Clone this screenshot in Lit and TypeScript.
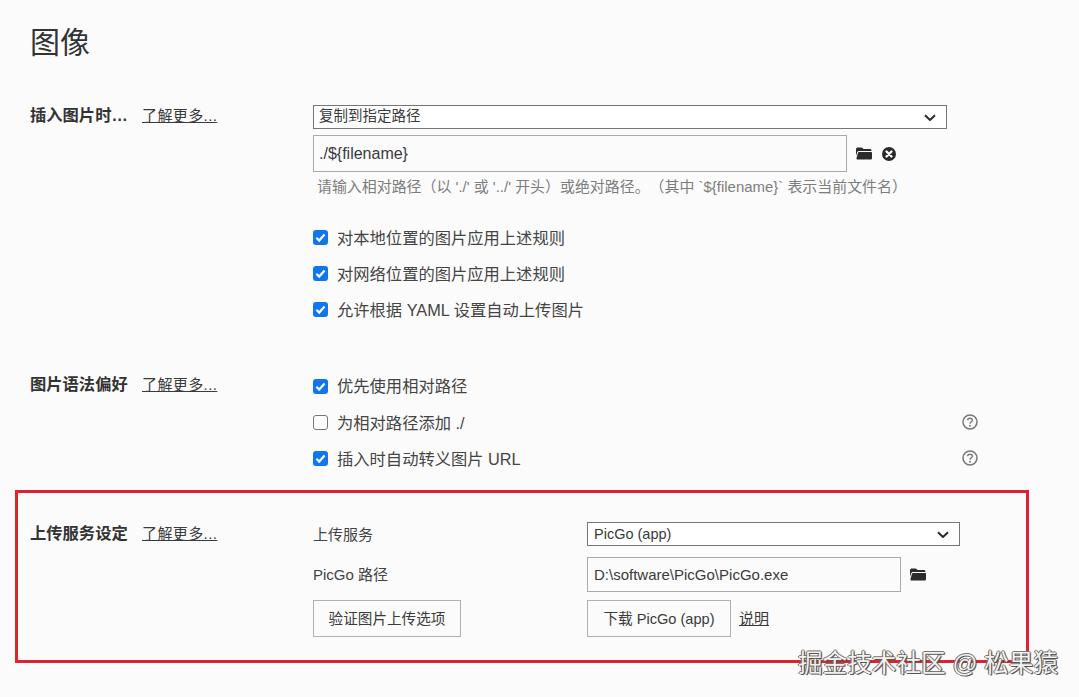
import { LitElement, html, css, svg } from "lit";
import { customElement } from "lit/decorators.js";

const folder = html`<svg class="ico folder" viewBox="0 0 16 13" aria-hidden="true"><path fill="#2b2b2b" d="M0 2.2C0 1.2.8.5 1.7.5h3.6c.6 0 1 .2 1.3.6l.8 1h6.5c.9 0 1.6.7 1.6 1.5v.4H2.8c-.7 0-1.3.4-1.5 1L0 8.8z"/><path fill="#2b2b2b" d="M3 5h12.3c.4 0 .7.3.7.7v5.2c0 1-.7 1.6-1.6 1.6H1.5C.9 12.500.4 12 .4 11.500L2 5.800C2.200 5.300 2.500 5 3 5z"/></svg>`;

const clear = html`<svg class="ico clear" viewBox="0 0 14 14" aria-hidden="true"><circle cx="7" cy="7" r="7" fill="#2b2b2b"/><path d="M4.500 4.500l5 5M9.500 4.500l-5 5" stroke="#fff" stroke-width="2.300" stroke-linecap="round"/></svg>`;

const help = html`<svg class="help" viewBox="0 0 16 16" aria-hidden="true"><circle cx="8" cy="8" r="7" fill="none" stroke="#777" stroke-width="1.500"/><path d="M5.700 6.300c0-1.300 1-2.100 2.300-2.100s2.300.8 2.300 2c0 1.900-2.300 1.800-2.300 3.500" fill="none" stroke="#777" stroke-width="1.400"/><circle cx="8" cy="11.800" r=".95" fill="#777"/></svg>`;

const chevron = svg`<path d="M1 1.300l5 4.700 5-4.700" fill="none" stroke="#2a2a2a" stroke-width="2"/>`;

@customElement("app-root")
export class AppRoot extends LitElement {
  static styles = css`
    :host {
      display: block;
      position: relative;
      width: 1079px;
      height: 697px;
      overflow: hidden;
      background: #fbfbfc;
      color: #3a3a3a;
      font-family: "Liberation Sans", "Noto Sans CJK SC", sans-serif;
      font-size: 16px;
      text-spacing-trim: space-all;
    }
    h1 {
      margin: 0;
      padding: 22px 0 0 30px;
      height: 42px;
      line-height: 42px;
      font-size: 30px;
      font-weight: 400;
      color: #333;
    }
    .section {
      display: grid;
      grid-template-columns: 283px 665px;
      padding-left: 30px;
    }
    .first { margin-top: 41px; }
    .second { margin-top: 41px; }
    .head {
      display: flex;
      height: 22px;
      line-height: 22px;
      align-items: center;
    }
    .first .head { margin-top: -1px; }
    .second .head { margin-top: 5px; }
    .title {
      width: 112px;
      font-weight: 700;
      font-size: 16.300px;
      color: #333;
      white-space: nowrap;
    }
    a {
      color: #3a3a3a;
      text-decoration: underline;
      font-size: 15px;
      letter-spacing: 0.4px;
      white-space: nowrap;
    }
    .head a { margin-top: 2px; }
    .select {
      box-sizing: border-box;
      display: flex;
      align-items: center;
      justify-content: space-between;
      width: 100%;
      height: 24px;
      padding: 0 10px 0 6px;
      border: 1.500px solid #767676;
      background: #fff;
      font-size: 14.500px;
    }
    .first .select { width: 634px; padding-left: 5px; }
    .first .select span { margin-bottom: 6px; }
    .select svg { width: 12px; height: 7px; }
    .pathrow {
      display: flex;
      align-items: center;
      margin-top: 6px;
    }
    .input {
      box-sizing: border-box;
      display: flex;
      align-items: center;
      height: 37px;
      padding-left: 6px;
      border: 1px solid #aaa;
      background: #fbfbfc;
      font-size: 15px;
      white-space: nowrap;
    }
    .pathrow .input { width: 534px; padding-left: 5px; font-size: 16px; }
    .ico { display: block; flex: none; }
    .folder { width: 16px; height: 13px; margin-left: 9px; }
    .clear { width: 14px; height: 14px; margin-left: 10px; }
    .hint {
      height: 20px;
      line-height: 20px;
      margin-top: 5px;
      padding-left: 4px;
      font-size: 14.950px;
      color: #7d7d7d;
      white-space: nowrap;
    }
    .first .checks { margin-top: 22px; }
    .check {
      display: flex;
      align-items: center;
      height: 36px;
      font-size: 16.300px;
      color: #444;
      white-space: nowrap;
    }
    .second .check:first-child .text { margin-bottom: 2px; }
    .box {
      box-sizing: border-box;
      flex: none;
      display: flex;
      width: 15px;
      height: 15px;
      margin-right: 9px;
      border-radius: 3px;
    }
    .box.on { background: #0f76f0; }
    .box.off { border: 1.500px solid #767676; background: #fff; }
    .box svg { width: 15px; height: 15px; }
    .grow { flex: 1; }
    .help { width: 16px; height: 16px; flex: none; }
    .upload {
      box-sizing: border-box;
      display: grid;
      grid-template-columns: 298px 1fr;
      width: 1014px;
      height: 173px;
      margin: 14px 0 0 15px;
      padding: 29px 0 0 12px;
      border: 3px solid #dc2430;
    }
    .upload .head { margin-top: 0; }
    .form {
      display: grid;
      grid-template-columns: 274px 373px;
      grid-template-rows: 24px 38px 37px;
      row-gap: 8px;
      align-items: center;
      margin-left: -15px;
    }
    .form .row2 { display: flex; align-items: center; align-self: end; }
    .form .row2 .input { width: 314px; height: 35px; }
    .lbl { font-size: 15px; color: #444; white-space: nowrap; }
    .lbl.path { align-self: end; line-height: 35px; }
    .lbl.svc { margin-bottom: 2px; }
    .btn {
      box-sizing: border-box;
      display: flex;
      align-items: center;
      justify-content: center;
      height: 37px;
      padding-bottom: 3px;
      border: 1px solid #b0b0b0;
      background: #fbfbfc;
      font-size: 14.600px;
      white-space: nowrap;
    }
    .btn.a { width: 148px; }
    .btn.b { width: 144px; }
    .btnrow { display: flex; align-items: center; gap: 8px; }
    .btnrow a { margin-bottom: 3px; letter-spacing: 0; }
    .mark {
      position: absolute;
      left: 798px;
      top: 648px;
      line-height: 32px;
      font-size: 24.600px;
      color: #f2f2f2;
      white-space: nowrap;
      text-shadow: 1px 1px 0 #555, -1px 0 0 #666, 0 -1px 0 #777, 1px 0 1px #555;
    }
  `;

  private renderCheck(label: string, on: boolean, withHelp = false) {
    return html`<div class="check">
      <span class="box ${on ? "on" : "off"}">
        ${on
          ? html`<svg viewBox="0 0 15 15" aria-hidden="true"><path d="M3.400 7.800l2.800 2.800 5.400-6" fill="none" stroke="#fff" stroke-width="2.200"/></svg>`
          : ""}
      </span>
      <span class="text">${label}</span>
      ${withHelp ? html`<span class="grow"></span>${help}` : ""}
    </div>`;
  }

  render() {
    return html`
      <h1>图像</h1>
      <section class="section first">
        <div class="head"><span class="title">插入图片时…</span><a>了解更多...</a></div>
        <div>
          <div class="select"><span>复制到指定路径</span><svg viewBox="0 0 12 7" aria-hidden="true">${chevron}</svg></div>
          <div class="pathrow"><div class="input">./\${filename}</div>${folder}${clear}</div>
          <div class="hint">请输入相对路径（以 './' 或 '../' 开头）或绝对路径。（其中 \`\${filename}\` 表示当前文件名）</div>
          <div class="checks">
            ${this.renderCheck("对本地位置的图片应用上述规则", true)}
            ${this.renderCheck("对网络位置的图片应用上述规则", true)}
            ${this.renderCheck("允许根据 YAML 设置自动上传图片", true)}
          </div>
        </div>
      </section>
      <section class="section second">
        <div class="head"><span class="title">图片语法偏好</span><a>了解更多...</a></div>
        <div class="checks">
          ${this.renderCheck("优先使用相对路径", true)}
          ${this.renderCheck("为相对路径添加 ./", false, true)}
          ${this.renderCheck("插入时自动转义图片 URL", true, true)}
        </div>
      </section>
      <section class="upload">
        <div class="head"><span class="title">上传服务设定</span><a>了解更多...</a></div>
        <div class="form">
          <span class="lbl svc">上传服务</span>
          <div class="select"><span>PicGo (app)</span><svg viewBox="0 0 12 7" aria-hidden="true">${chevron}</svg></div>
          <span class="lbl path">PicGo 路径</span>
          <div class="row2"><div class="input">D:\\software\\PicGo\\PicGo.exe</div>${folder}</div>
          <div class="btn a">验证图片上传选项</div>
          <div class="btnrow"><div class="btn b">下载 PicGo (app)</div><a>说明</a></div>
        </div>
      </section>
      <div class="mark">掘金技术社区 @ 松果猿</div>
    `;
  }
}
